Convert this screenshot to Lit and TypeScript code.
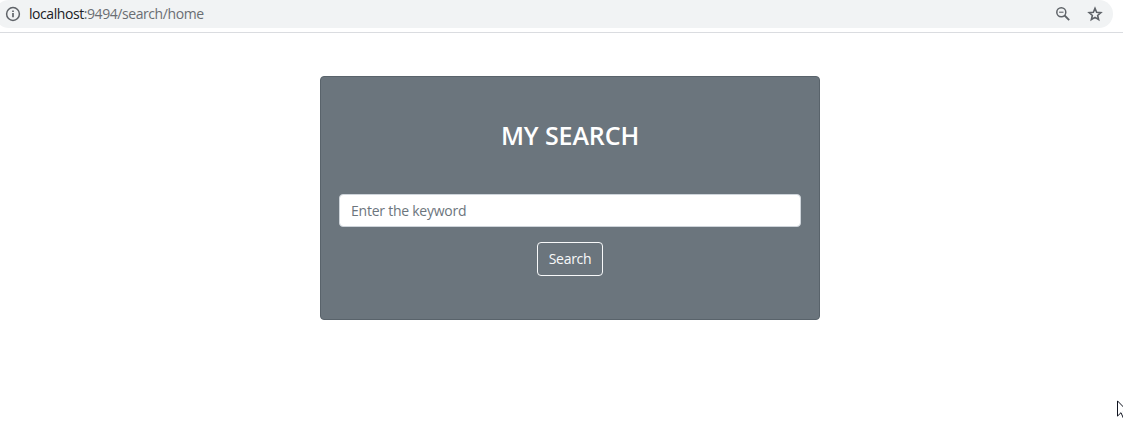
import { LitElement, html, css } from "lit";
import { customElement, state } from "lit/decorators.js";

@customElement("address-bar")
class AddressBar extends LitElement {
  static styles = css`
    :host { display: block; height: 33px; box-sizing: border-box; border-bottom: 1px solid #dadce0; background: #fff; }
    .pill { display: flex; align-items: center; box-sizing: border-box; height: 28px; margin: 0 10px 0 -5px;
      padding: 0 10px; background: #f1f3f4; border-radius: 14px; }
    .url { margin-left: 8px; font: 14px/20px "Open Sans", "Noto Sans", sans-serif; letter-spacing: -0.43px; color: #6a6e73; white-space: nowrap; }
    .host { color: #202124; }
    .actions { display: flex; align-items: center; gap: 16px; margin-left: auto; }
    svg { display: block; flex: none; }
  `;
  render() {
    return html`
      <div class="pill">
        <svg width="16" height="16" viewBox="0 0 16 16" fill="none" stroke="#5f6368" stroke-width="1.5">
          <circle cx="8" cy="8" r="6.4" />
          <path d="M8 7.1v4.2M8 4.5v1.6" stroke-width="1.7" />
        </svg>
        <span class="url"><span class="host">localhost</span>:9494/search/home</span>
        <div class="actions">
          <svg width="16" height="16" viewBox="0 0 16 16" fill="none" stroke="#5f6368" stroke-width="1.5">
            <circle cx="6.3" cy="6.2" r="4.5" />
            <path d="M9.6 9.5l4.6 4.6" stroke-width="1.8" />
            <path d="M4.1 6.2h4.4" stroke-width="1.1" />
          </svg>
          <svg width="16" height="16" viewBox="0 0 16 16" fill="none" stroke="#5f6368" stroke-width="1.6">
            <path d="M8 2.4l1.65 3.9 4.2.36-3.2 2.77.97 4.1L8 11.35l-3.62 2.18.97-4.1-3.2-2.77 4.2-.36z" />
          </svg>
        </div>
      </div>
    `;
  }
}

@customElement("search-card")
class SearchCard extends LitElement {
  @state() keyword = "";
  static styles = css`
    :host { display: block; box-sizing: border-box; width: 500px; height: 244px; padding: 42px 18px 0;
      background: #6b757d; border: 1px solid #59636b; border-radius: 4px; color: #fff;
      font-family: "Open Sans", "Noto Sans", sans-serif; }
    h1 { margin: 0 0 43px; font-size: 25px; line-height: 32px; font-weight: 600; letter-spacing: -0.1px; text-align: center; }
    form { display: flex; flex-direction: column; align-items: center; gap: 15px; }
    input { box-sizing: border-box; width: 100%; height: 33px; padding: 0 11px; border: 1px solid #ced4da;
      border-radius: 4px; background: #fff; font: 14px "Open Sans", "Noto Sans", sans-serif; letter-spacing: -0.24px; color: #495057; outline: none; }
    input::placeholder { color: #6c757d; opacity: 1; }
    button { box-sizing: border-box; width: 66px; height: 34px; padding: 0 0 1px; border: 1px solid #f8f9fa;
      border-radius: 4px; background: transparent; color: #f8f9fa; font: 14px "Open Sans", "Noto Sans", sans-serif; letter-spacing: -0.3px; }
  `;
  render() {
    return html`
      <h1>MY SEARCH</h1>
      <form @submit=${(e: Event) => e.preventDefault()}>
        <input placeholder="Enter the keyword" .value=${this.keyword}
          @input=${(e: Event) => (this.keyword = (e.target as HTMLInputElement).value)} />
        <button type="submit">Search</button>
      </form>
    `;
  }
}

@customElement("app-root")
class AppRoot extends LitElement {
  static styles = css`
    :host { display: block; position: relative; height: 423px; overflow: hidden; background: #fff; }
    main { display: flex; padding: 43px 0 0 320px; }
    .pointer { position: absolute; right: -6px; bottom: 4px; display: block; }
  `;
  render() {
    return html`
      <address-bar></address-bar>
      <main><search-card></search-card></main>
      <svg class="pointer" width="12" height="19" viewBox="0 0 12 19">
        <path d="M.5.9v15.2l3.5-3.4 2.4 5.5 2.2-1-2.4-5.3h5z" fill="#fff" stroke="#101420" />
      </svg>
    `;
  }
}
